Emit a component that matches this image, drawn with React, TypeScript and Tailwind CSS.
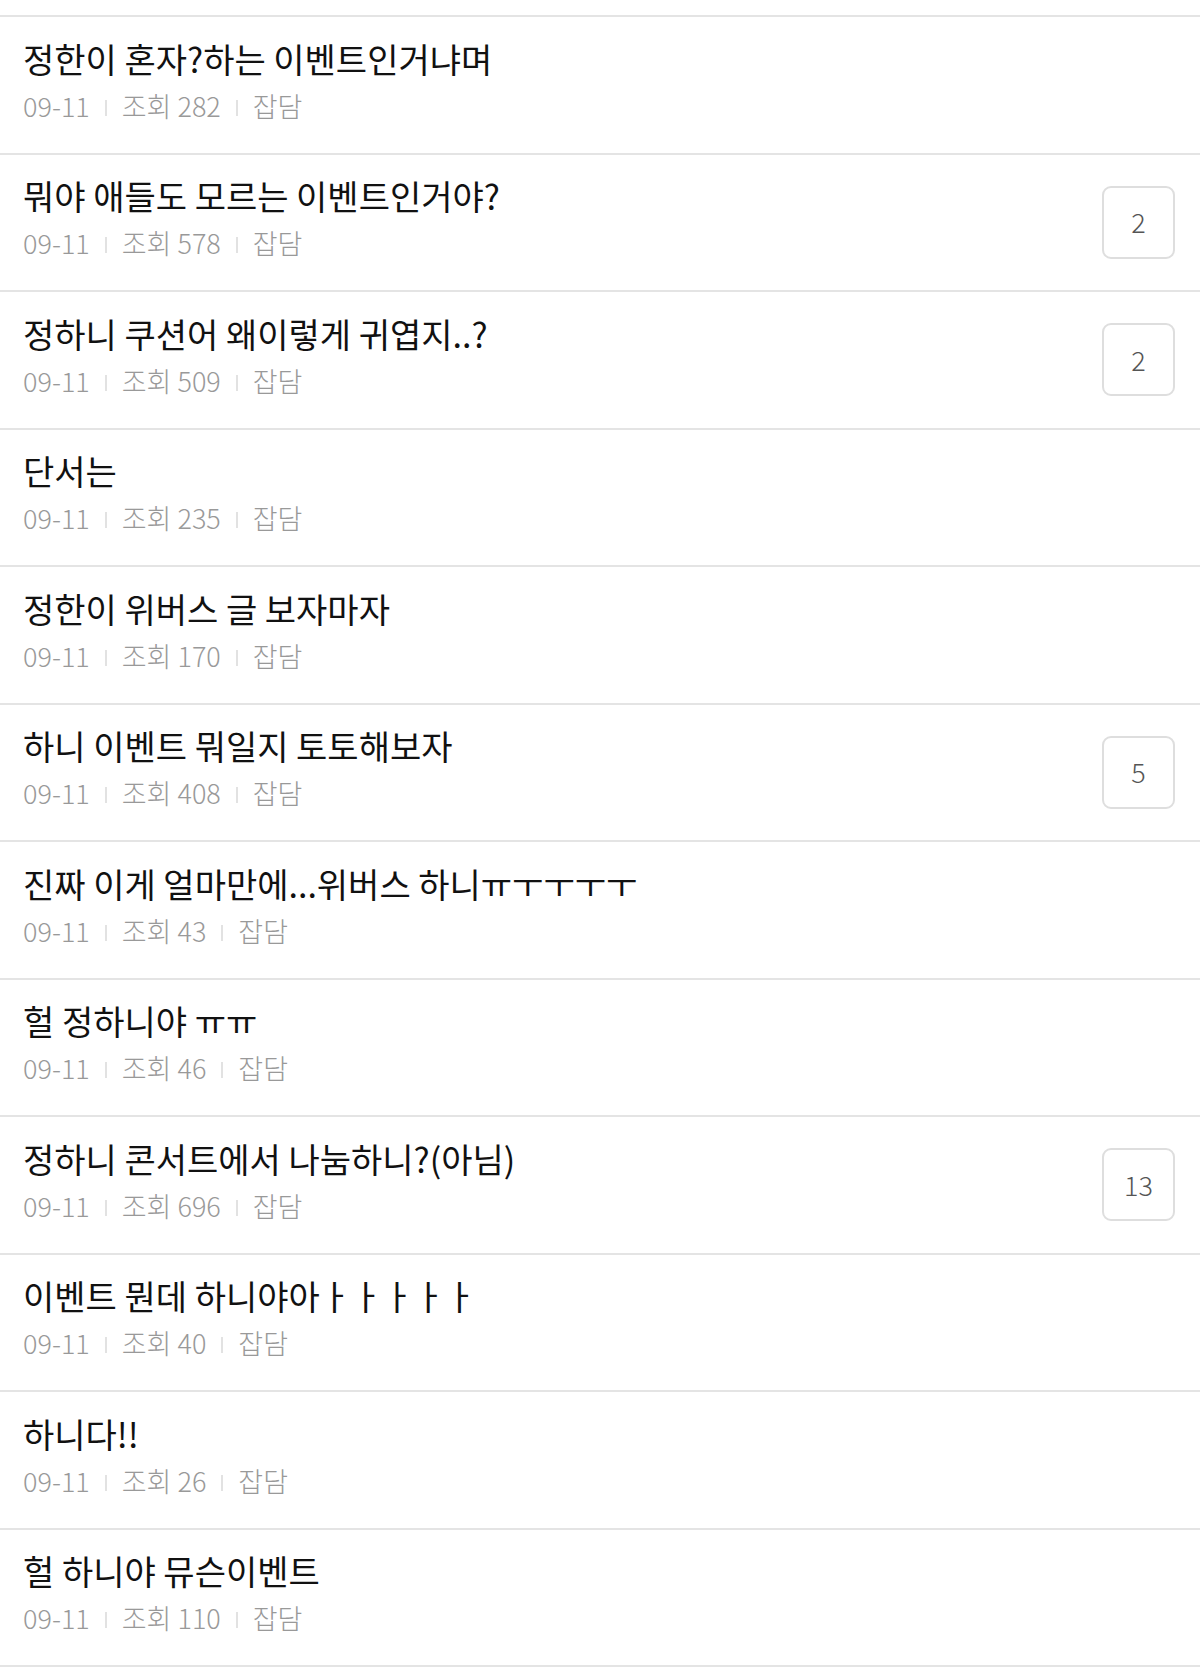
const posts = [
  { title: '정한이 혼자?하는 이벤트인거냐며', views: 282 },
  { title: '뭐야 애들도 모르는 이벤트인거야?', views: 578, comments: 2 },
  { title: '정하니 쿠션어 왜이렇게 귀엽지..?', views: 509, comments: 2 },
  { title: '단서는', views: 235 },
  { title: '정한이 위버스 글 보자마자', views: 170 },
  { title: '하니 이벤트 뭐일지 토토해보자', views: 408, comments: 5 },
  { title: '진짜 이게 얼마만에...위버스 하니ㅠㅜㅜㅜㅜ', views: 43 },
  { title: '헐 정하니야 ㅠㅠ', views: 46 },
  { title: '정하니 콘서트에서 나눔하니?(아님)', views: 696, comments: 13 },
  { title: '이벤트 뭔데 하니야아ㅏㅏㅏㅏㅏ', views: 40 },
  { title: '하니다!!', views: 26 },
  { title: '헐 하니야 뮤슨이벤트', views: 110 },
];

function Divider() {
  return <span className="mx-[15px] mt-[4px] inline-block h-[16px] w-[2px] bg-[#e2e2e2]" />;
}

export default function App() {
  return (
    <div className="min-h-[1669px] bg-white pt-[15px] font-['Noto_Sans_CJK_KR','Noto_Sans',sans-serif]">
      <ul className="border-t-2 border-[#e4e4e4]">
        {posts.map((p, i) => (
          <li key={i} className="flex h-[137.5px] items-center border-b-2 border-[#e4e4e4] pl-[23px] pr-[25px]">
            <div className="flex flex-1 flex-col pb-[7px]">
              <p className="text-[34px] leading-[40px] text-[#111]">{p.title}</p>
              <div className="mt-[9px] flex items-center text-[27px] font-light leading-[36px] text-[#999]">
                <span>09-11</span>
                <Divider />
                <span>조회 {p.views}</span>
                <Divider />
                <span>잡담</span>
              </div>
            </div>
            {p.comments !== undefined && (
              <div className="flex h-[73px] w-[73px] items-center justify-center rounded-[9px] border-2 border-[#dedede] text-[27px] font-light text-[#555]">
                {p.comments}
              </div>
            )}
          </li>
        ))}
      </ul>
    </div>
  );
}
